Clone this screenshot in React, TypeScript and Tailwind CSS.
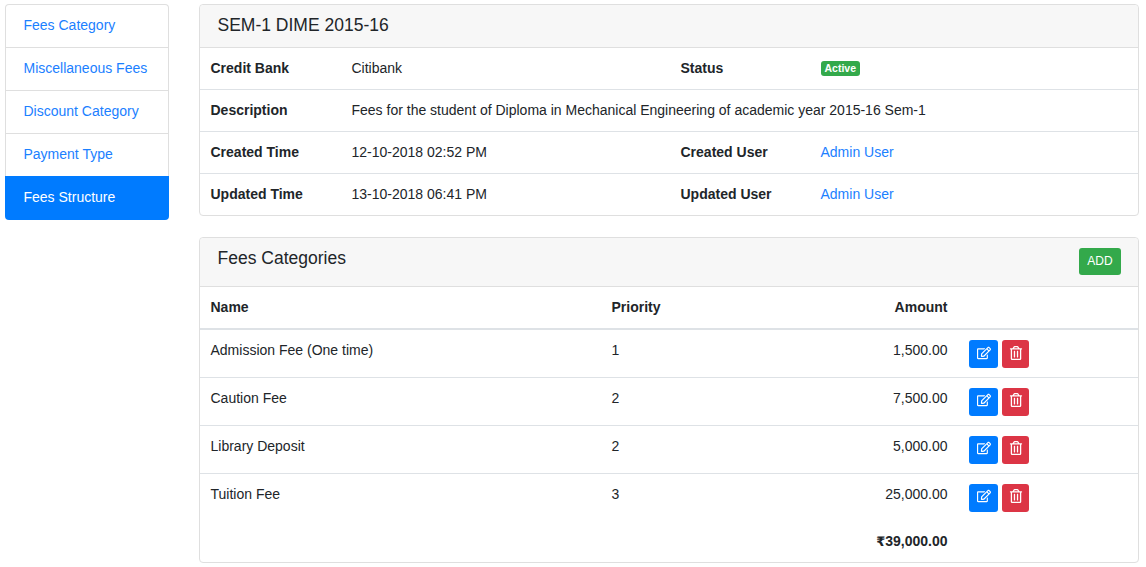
import { FaRegEdit, FaRegTrashAlt } from "react-icons/fa";

const menu = ["Fees Category", "Miscellaneous Fees", "Discount Category", "Payment Type"];

const fees = [
  { name: "Admission Fee (One time)", priority: 1, amount: "1,500.00" },
  { name: "Caution Fee", priority: 2, amount: "7,500.00" },
  { name: "Library Deposit", priority: 2, amount: "5,000.00" },
  { name: "Tuition Fee", priority: 3, amount: "25,000.00" },
];

const Sidebar = () => {
  return (
    <div className="w-[164px] shrink-0 self-start flex flex-col">
      {menu.map((item, i) => (
        <a
          key={item}
          href="#"
          className={`h-[43px] pl-[17.5px] pb-[2px] flex items-center border-x border-t border-[#dfdfdf] text-[#1b80ff] ${i === 0 ? "rounded-t" : ""}`}
        >
          {item}
        </a>
      ))}
      <a href="#" className="h-[44px] pl-[18.5px] pb-[2px] flex items-center bg-[#007bff] text-white rounded-b">
        Fees Structure
      </a>
    </div>
  );
};

const InfoCard = () => {
  return (
    <div className="border border-[#dfdfdf] rounded">
      <div className="h-[43px] pl-[17.5px] pb-[2px] flex items-center bg-[#f7f7f7] border-b border-[#dfdfdf] text-[17.5px] rounded-t">
        SEM-1 DIME 2015-16
      </div>
      <div className="grid grid-cols-[141px_329px_140px_1fr] px-[10.5px] [&>*]:flex [&>*]:items-center">
        <div className="h-[42px] font-bold -ml-[10.5px] pl-[10.5px] border-b border-[#dee2e6]">Credit Bank</div>
        <div className="h-[42px] border-b border-[#dee2e6]">Citibank</div>
        <div className="h-[42px] font-bold border-b border-[#dee2e6]">Status</div>
        <div className="h-[42px] -mr-[10.5px] border-b border-[#dee2e6]">
          <span className="h-[15px] px-[4px] flex items-center bg-[#33a94b] text-white text-[10.5px] font-bold rounded-[3px]">
            Active
          </span>
        </div>
        <div className="h-[42px] font-bold -ml-[10.5px] pl-[10.5px] border-b border-[#dee2e6]">Description</div>
        <div className="h-[42px] col-span-3 -mr-[10.5px] border-b border-[#dee2e6]">
          Fees for the student of Diploma in Mechanical Engineering of academic year 2015-16 Sem-1
        </div>
        <div className="h-[42px] font-bold -ml-[10.5px] pl-[10.5px] border-b border-[#dee2e6]">Created Time</div>
        <div className="h-[42px] border-b border-[#dee2e6]">12-10-2018 02:52 PM</div>
        <div className="h-[42px] font-bold border-b border-[#dee2e6]">Created User</div>
        <div className="h-[42px] -mr-[10.5px] border-b border-[#dee2e6]">
          <a href="#" className="text-[#1b80ff]">Admin User</a>
        </div>
        <div className="h-[41px] font-bold">Updated Time</div>
        <div className="h-[41px]">13-10-2018 06:41 PM</div>
        <div className="h-[41px] font-bold">Updated User</div>
        <div className="h-[41px]">
          <a href="#" className="text-[#1b80ff]">Admin User</a>
        </div>
      </div>
    </div>
  );
};

const FeesCard = () => {
  return (
    <div className="mt-[21px] border border-[#dfdfdf] rounded">
      <div className="h-[49px] pl-[17.5px] pr-[17px] flex justify-between bg-[#f7f7f7] border-b border-[#dfdfdf] rounded-t">
        <span className="mt-[8px] text-[17.5px] leading-[24px]">Fees Categories</span>
        <button className="mt-[10px] w-[42px] h-[27px] bg-[#33a94b] text-white text-[12px] rounded-[3px]">ADD</button>
      </div>
      <table className="w-full table-fixed border-collapse">
        <thead>
          <tr className="h-[42px] border-b-2 border-[#dee2e6]">
            <th className="w-[401px] pl-[10.5px] text-left">Name</th>
            <th className="w-[150px] pl-[10.5px] text-left">Priority</th>
            <th className="w-[208px] pr-[11.5px] text-right">Amount</th>
            <th />
          </tr>
        </thead>
        <tbody>
          {fees.map((fee, i) => (
            <tr key={fee.name} className={`${i < fees.length - 1 ? "h-[48px] border-b border-[#dee2e6]" : "h-[48px]"} align-top`}>
              <td className="pl-[10.5px] pt-[10px]">{fee.name}</td>
              <td className="pl-[10.5px] pt-[10px]">{fee.priority}</td>
              <td className="pr-[11.5px] pt-[10px] text-right">{fee.amount}</td>
              <td className="pl-[10px] pt-[10px]">
                <div className="flex gap-[4px]">
                  <button className="w-[29px] h-[28px] pb-[3px] flex items-center justify-center bg-[#007bff] text-white rounded-[3px]">
                    <FaRegEdit className="text-[14px]" />
                  </button>
                  <button className="w-[27px] h-[28px] pb-[3px] flex items-center justify-center bg-[#dc3545] text-white rounded-[3px]">
                    <FaRegTrashAlt className="text-[14px]" />
                  </button>
                </div>
              </td>
            </tr>
          ))}
          <tr className="h-[41px]">
            <td colSpan={3} className="pr-[11.5px] text-right font-bold">
              <span className="text-[13px] font-['DejaVu_Sans',sans-serif]">₹</span>39,000.00
            </td>
            <td />
          </tr>
        </tbody>
      </table>
    </div>
  );
};

export default function App() {
  return (
    <div className="w-[1146px] h-[567px] overflow-hidden bg-white flex gap-[30px] pl-[5px] pt-[4px] text-[14px] leading-[21px] text-[#212529] font-['Liberation_Sans',Arial,sans-serif]">
      <Sidebar />
      <div className="w-[940px] shrink-0">
        <InfoCard />
        <FeesCard />
      </div>
    </div>
  );
}
